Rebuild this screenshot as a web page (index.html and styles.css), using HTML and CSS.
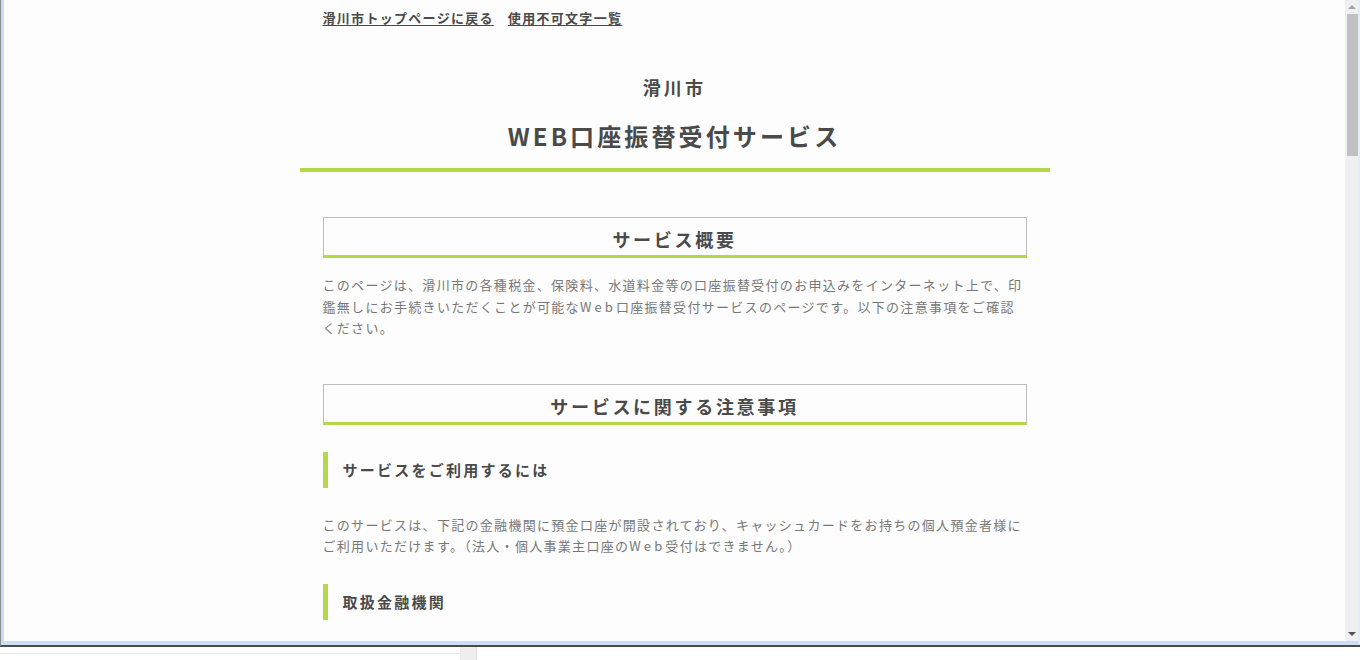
FILE: index.html
```html
<!DOCTYPE html>
<html lang="ja">
<head>
<meta charset="utf-8">
<title>滑川市 WEB口座振替受付サービス</title>
<link rel="stylesheet" href="styles.css">
</head>
<body>
<div class="window">
  <div class="frame">
    <div class="viewport">
      <div class="page">
        <nav class="toplinks">
          <a href="#">滑川市トップページに戻る</a>
          <a href="#">使用不可文字一覧</a>
        </nav>
        <header class="masthead">
          <p class="city">滑川市</p>
          <h1 class="service-title">WEB口座振替受付サービス</h1>
        </header>
        <main class="content">
          <section class="block">
            <h2 class="sec-title">サービス概要</h2>
            <p class="text">このページは、滑川市の各種税金、保険料、水道料金等の口座振替受付のお申込みをインターネット上で、印鑑無しにお手続きいただくことが可能な<span class="latin">Web</span>口座振替受付サービスのページです。以下の注意事項をご確認ください。</p>
          </section>
          <section class="block">
            <h2 class="sec-title">サービスに関する注意事項</h2>
            <h3 class="sub-title">サービスをご利用するには</h3>
            <p class="text">このサービスは、下記の金融機関に預金口座が開設されており、キャッシュカードをお持ちの個人預金者様にご利用いただけます。（法人・個人事業主口座の<span class="latin">Web</span>受付はできません。）</p>
            <h3 class="sub-title">取扱金融機関</h3>
          </section>
        </main>
      </div>
    </div>
    <div class="scrollbar">
      <span class="arrow arrow-up"></span>
      <span class="thumb"></span>
      <span class="track-rest"></span>
      <span class="arrow arrow-down"></span>
    </div>
  </div>
</div>
<div class="statusbar">
  <div class="status-field"></div>
  <div class="status-sep"></div>
  <div class="status-rest"></div>
</div>
</body>
</html>
```

FILE: styles.css
```css
* { box-sizing: border-box; }

html, body {
  margin: 0;
  padding: 0;
  height: 100%;
  overflow: hidden;
  background: #ffffff;
}

body {
  font-family: "Noto Sans CJK JP", "Noto Sans", sans-serif;
  color: #444444;
}

.window {
  height: 647px;
  border-left: 1px solid #8c8c8c;
  border-bottom: 2px solid #4b4b4b;
  display: flex;
}

.frame {
  flex: 1;
  display: flex;
  border-left: 3px solid #cbdcf2;
  border-bottom: 4px solid #cddff5;
  border-right: 2px solid #e4ecf8;
  min-width: 0;
}

.viewport {
  flex: 1;
  background: #fdfdfd;
  overflow: hidden;
  min-width: 0;
}

.page {
  width: 750px;
  margin: 0 auto;
}

.toplinks {
  padding: 8px 23px 0;
  display: flex;
  gap: 14px;
  line-height: 20px;
}

.toplinks a {
  font-size: 13px;
  font-weight: 700;
  letter-spacing: 0.1em;
  color: #4a4a4a;
  text-decoration: underline;
  text-underline-offset: 2px;
}

.masthead {
  margin-top: 44px;
  text-align: center;
  padding-bottom: 12px;
  border-bottom: 4px solid #b4d84a;
}

.city {
  margin: 0;
  font-size: 18px;
  font-weight: 700;
  letter-spacing: 0.18em;
  line-height: 30px;
  color: #4a4a4a;
}

.service-title {
  margin: 14px 0 0;
  font-size: 24px;
  font-weight: 700;
  letter-spacing: 0.13em;
  line-height: 40px;
  color: #4a4a4a;
}

.content {
  padding: 0 23px;
}

.block {
  margin-top: 45px;
}

.sec-title {
  margin: 0;
  border: 1px solid #bdbdbd;
  border-bottom: 3px solid #b4d84a;
  padding: 8px 0 3px;
  font-size: 18px;
  font-weight: 700;
  letter-spacing: 0.15em;
  line-height: 26px;
  text-align: center;
  color: #4a4a4a;
}

.text {
  margin: 16px 0 0;
  font-size: 13px;
  font-weight: 400;
  letter-spacing: 0.1em;
  line-height: 21.5px;
  color: #787878;
}

.latin {
  letter-spacing: 0.24em;
}

.sub-title {
  margin: 27px 0 0;
  border-left: 5px solid #b4d84a;
  padding-left: 15px;
  font-size: 15px;
  font-weight: 700;
  letter-spacing: 0.15em;
  line-height: 36px;
  color: #4a4a4a;
}

.sub-title + .text {
  margin-top: 26px;
}

.scrollbar {
  width: 13px;
  background: #f0f0f0;
  display: flex;
  flex-direction: column;
  align-items: center;
}

.arrow {
  width: 0;
  height: 0;
  border-left: 4px solid transparent;
  border-right: 4px solid transparent;
}

.arrow-up {
  margin-top: 5px;
  border-bottom: 4px solid #a3a3a3;
}

.arrow-down {
  margin-bottom: 5px;
  border-top: 4px solid #505050;
}

.thumb {
  margin-top: 5px;
  width: 11px;
  height: 142px;
  background: #c1c1c1;
  align-self: flex-end;
}

.track-rest {
  flex: 1;
}

.statusbar {
  height: 13px;
  display: flex;
  background: #ffffff;
}

.status-field {
  width: 460px;
  border-top: 6px solid #ffffff;
  border-bottom: 6px solid #ffffff;
  background: #e9e9e9;
}

.status-sep {
  width: 17px;
  background: #eeeeee;
  border-right: 1px solid #dddddd;
}

.status-rest {
  flex: 1;
}
```
